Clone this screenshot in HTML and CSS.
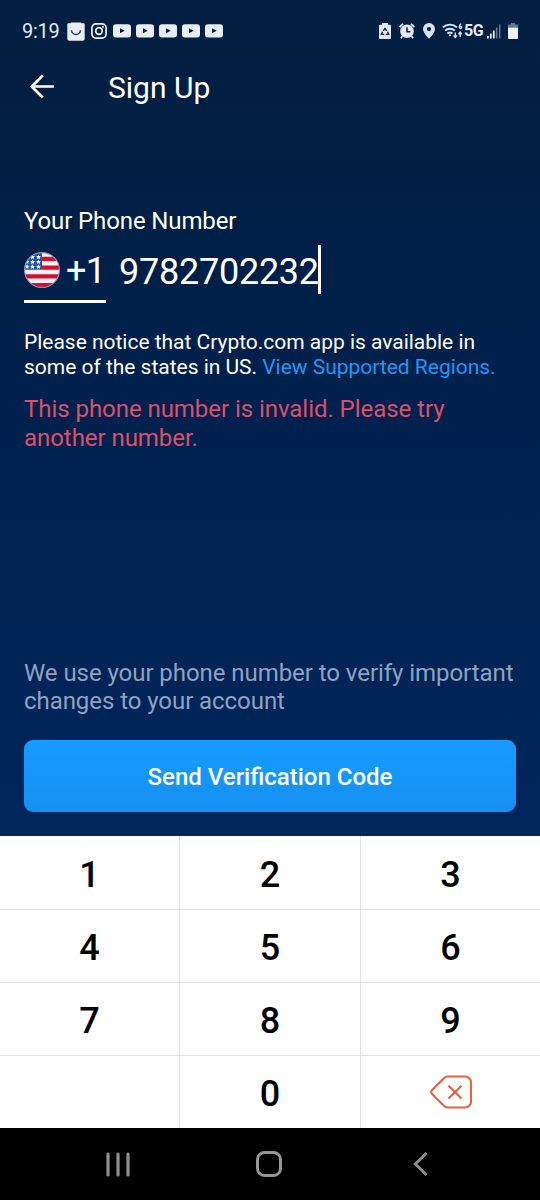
FILE: index.html
```html
<!DOCTYPE html>
<html lang="en">
<head>
<meta charset="utf-8">
<title>Sign Up</title>
<link rel="stylesheet" href="styles.css">
</head>
<body>
<div class="screen">
  <header class="status">
    <span class="clock">9:19</span>
    <svg class="st-bag" width="18" height="19" viewBox="0 0 18 19"><path d="M1.500 1.200h2L4 .5h10l.5.7h2a1.200 1.200 0 0 1 1.200 1.200v14.300a2 2 0 0 1-2 2H2.300a2 2 0 0 1-2-2V2.400a1.200 1.200 0 0 1 1.200-1.200z" fill="#e9edf7"/><path d="M4.700 8.200v.5a4.300 3.800 0 0 0 8.600 0v-.5" fill="none" stroke="#10294a" stroke-width="1.300"/></svg>
    <svg class="st-ig" width="16" height="16" viewBox="0 0 16 16" fill="none" stroke="#e9edf7" stroke-width="1.700"><rect x=".9" y=".9" width="14.200" height="14.200" rx="4"/><circle cx="8" cy="8" r="3.300"/><circle cx="12" cy="4" r=".3"/></svg>
    <div class="videos">
      <svg width="18" height="14" viewBox="0 0 18 14"><rect y=".3" width="18" height="13.200" rx="3" fill="#e9edf7"/><path d="M7 4.300v5l4.700-2.500z" fill="#071c3b"/></svg>
      <svg width="18" height="14" viewBox="0 0 18 14"><rect y=".3" width="18" height="13.200" rx="3" fill="#e9edf7"/><path d="M7 4.300v5l4.700-2.500z" fill="#071c3b"/></svg>
      <svg width="18" height="14" viewBox="0 0 18 14"><rect y=".3" width="18" height="13.200" rx="3" fill="#e9edf7"/><path d="M7 4.300v5l4.700-2.500z" fill="#071c3b"/></svg>
      <svg width="18" height="14" viewBox="0 0 18 14"><rect y=".3" width="18" height="13.200" rx="3" fill="#e9edf7"/><path d="M7 4.300v5l4.700-2.500z" fill="#071c3b"/></svg>
      <svg width="18" height="14" viewBox="0 0 18 14"><rect y=".3" width="18" height="13.200" rx="3" fill="#e9edf7"/><path d="M7 4.300v5l4.700-2.500z" fill="#071c3b"/></svg>
    </div>
    <svg class="st-recycle" width="12" height="16" viewBox="0 0 12 16"><path d="M3 0h6v1.800h2a1 1 0 0 1 1 1V15a1 1 0 0 1-1 1H1a1 1 0 0 1-1-1V2.800a1 1 0 0 1 1-1h2z" fill="#e3e9f6"/><path d="M4.200 7.900 6 5.500l1.800 2.400M8.600 8.700l1 2.500-2.800.3M5.200 11.500l-2.800-.3 1-2.500" fill="none" stroke="#10233f" stroke-width="1.400"/></svg>
    <svg class="st-alarm" width="16" height="16" viewBox="0 0 16 16"><circle cx="8" cy="8.200" r="6.800" fill="#e3e9f6"/><path d="M.6 4 4 .8M15.400 4 12 .8M3.400 13 2 15.200M12.600 13l1.400 2.200" stroke="#e3e9f6" stroke-width="1.800"/><path d="M8 4.200v4.500h3.300" fill="none" stroke="#071c3b" stroke-width="1.500"/></svg>
    <svg class="st-pin" width="12" height="16" viewBox="0 0 12 16"><path fill-rule="evenodd" d="M6 0a6 6 0 0 1 6 6c0 4-6 9.800-6 9.800S0 10 0 6a6 6 0 0 1 6-6zM6 4a2.100 2.100 0 1 0 0 4.200A2.100 2.100 0 0 0 6 4z" fill="#d9e1f3"/></svg>
    <svg class="st-wifi" width="21" height="16" viewBox="0 0 21 16" fill="none" stroke="#dce6fa" stroke-width="1.900"><path d="M.8 4.400a10.500 10.500 0 0 1 14.200 0M3 7.600a7.300 7.300 0 0 1 9.800 0M5.400 10.600a4 4 0 0 1 5 0"/><path d="M7.900 11.500v1.700" stroke-width="2"/><path d="M13.300 9.500v4.500M11.600 12.400l1.700 2 1.700-2M18.200 14V9.500M16.500 11.200l1.700-2 1.700 2" stroke-width="1.400"/><path d="M19.200 1c-2.200.5-2.400 4.500-.8 4.500s1.700-2.500-.3-2" stroke-width="1.300"/></svg>
    <span class="net">5G</span>
    <svg class="st-signal" width="14" height="15" viewBox="0 0 14 15"><path d="M0 12h1.800v2.500H0zM2.900 9.500h1.800v5H2.900zM5.900 6.500h1.800v8H5.900z" fill="#e3e9f6"/><path d="M8.900 3.500h1.500v11H8.900zM11.900.5h1.500v14h-1.500z" fill="#65799a"/></svg>
    <svg class="st-batt" width="10" height="16" viewBox="0 0 10 16"><path d="M3 0h4v1.500h3V5H0V1.500h3z" fill="#66768f"/><path d="M0 4.800h10V15a1 1 0 0 1-1 1H1a1 1 0 0 1-1-1z" fill="#edf1fa"/></svg>
  </header>

  <div class="titlebar">
    <svg width="26" height="26" viewBox="0 0 26 26" fill="none" stroke="#fff" stroke-width="2.700"><path d="M25 12.500H3M13.700 1.500 2.700 12.500l11 11"/></svg>
    <h1>Sign Up</h1>
  </div>

  <main class="content">
    <label class="label">Your Phone Number</label>
    <div class="phone">
      <div class="country">
        <svg width="36" height="36" viewBox="0 0 36 36">
          <defs>
            <clipPath id="disc"><circle cx="18" cy="18" r="17.500"/></clipPath>
          </defs>
          <g clip-path="url(#disc)">
            <rect width="36" height="36" fill="#f5f3f5"/>
            <path d="M0 4.700h36v4.300H0zM0 13.500h36v4.300H0zM0 22.300h36v4.200H0zM0 31h36v5H0z" fill="#d5102f"/>
            <rect width="18" height="17" fill="#1d55b0"/>
            <path id="star" d="M8.500 2.600l.75 1.500 1.650.2-1.200 1.150.3 1.650-1.500-.8-1.500.8.300-1.650-1.200-1.150 1.650-.2z" fill="#fff"/>
            <use href="#star" x="6"/><use href="#star" y="4.800"/><use href="#star" x="6" y="4.800"/><use href="#star" x="-5.500" y="4.800"/>
            <use href="#star" y="9.600"/><use href="#star" x="6" y="9.600"/><use href="#star" x="-5.500" y="9.600"/>
          </g>
          <circle cx="18" cy="18" r="17.400" fill="none" stroke="#8796b8" stroke-width="1.100"/>
        </svg>
        <span class="code">+1</span>
      </div>
      <div class="number">9782702232</div>
    </div>
    <p class="notice">Please notice that Crypto.com app is available in<br>some of the states in US. <a class="link">View Supported Regions.</a></p>
    <p class="error">This phone number is invalid. Please try<br>another number.</p>
    <p class="hint">We use your phone number to verify important<br>changes to your account</p>
    <button class="send">Send Verification Code</button>
  </main>

  <div class="keypad">
    <div class="key">1</div><div class="key">2</div><div class="key">3</div>
    <div class="key">4</div><div class="key">5</div><div class="key">6</div>
    <div class="key">7</div><div class="key">8</div><div class="key">9</div>
    <div class="key"></div><div class="key">0</div>
    <div class="key">
      <svg class="delete" width="42" height="34" viewBox="0 0 42 34" fill="none" stroke="#e8613f" stroke-width="2.100"><path d="M17.500 1.500H35a6 6 0 0 1 6 6v19a6 6 0 0 1-6 6H17.500a5 5 0 0 1-3.400-1.400L1.900 18.700a2.400 2.400 0 0 1 0-3.400L14.100 2.900a5 5 0 0 1 3.400-1.400z"/><path d="M18.500 10.700l13 12.700M31.500 10.700l-13 12.700"/></svg>
    </div>
  </div>

  <nav class="nav">
    <svg class="recents" width="24" height="25" viewBox="0 0 24 25" stroke="#8f8f8f" stroke-width="3.200" stroke-linecap="round"><path d="M2 2v21M12 2v21M22 2v21"/></svg>
    <svg class="home" width="26" height="26" viewBox="0 0 26 26" fill="none" stroke="#969696" stroke-width="3"><rect x="1.500" y="1.500" width="23" height="23" rx="7"/></svg>
    <svg class="back" width="15" height="25" viewBox="0 0 15 25" fill="none" stroke="#8f8f8f" stroke-width="2.800"><path d="M13.500 1 2.300 12l11.200 11"/></svg>
  </nav>
</div>
</body>
</html>
```

FILE: styles.css
```css
* { box-sizing: border-box; }
body { margin: 0; font-family: Roboto, sans-serif; }
h1, p { margin: 0; font-weight: 400; }
svg { display: block; flex: none; }

.screen {
  width: 540px;
  height: 1200px;
  overflow: hidden;
  display: flex;
  flex-direction: column;
  background: linear-gradient(#031e40 0, #00204a 300px, #00265c 836px);
  color: #fff;
}

.status {
  display: flex;
  align-items: center;
  height: 60px;
  padding: 2px 22px 0 22px;
  color: #e3e9f6;
}
.clock { width: 45px; font-size: 20px; line-height: 24px; letter-spacing: -0.3px; white-space: nowrap; }
.st-ig { margin-left: 6px; }
.videos { display: flex; gap: 5px; margin: 0 auto 0 6px; }
.st-alarm { margin-left: 8px; }
.st-pin { margin-left: 8px; }
.st-wifi { margin-left: 7px; }
.net { margin-left: 1px; width: 22px; font-size: 16px; font-weight: 700; line-height: 20px; letter-spacing: -0.4px; white-space: nowrap; }
.st-signal { margin-left: 1px; }
.st-batt { margin-left: 7px; }

.titlebar {
  display: flex;
  align-items: center;
  height: 54px;
  padding-left: 29px;
  gap: 53px;
}
.titlebar h1 { font-size: 30px; line-height: 36px; padding-top: 1px; }

.content {
  display: flex;
  flex-direction: column;
  height: 722px;
  padding: 93px 24px 24px;
}
.label { font-size: 24px; line-height: 28px; letter-spacing: -0.12px; }
.phone { display: flex; gap: 13px; margin-top: 10px; height: 58px; }
.country {
  display: flex;
  align-items: center;
  width: 82px;
  height: 58px;
  padding-bottom: 6px;
  border-bottom: 3px solid #fff;
}
.code { margin-left: 6px; padding-top: 3px; font-size: 36px; line-height: 42px; letter-spacing: -0.6px; }
.number {
  width: 202px;
  height: 49px;
  border-right: 3px solid #fff;
  font-size: 36px;
  line-height: 54px;
  letter-spacing: -0.25px;
}
.notice { margin-top: 27px; font-size: 21px; line-height: 25px; letter-spacing: -0.02px; white-space: nowrap; }
.link { color: #1f97f5; }
.error { margin-top: 15px; font-size: 24px; line-height: 29px; letter-spacing: -0.05px; color: #dd4f69; white-space: nowrap; }
.hint { margin-top: auto; font-size: 24px; line-height: 28px; letter-spacing: -0.06px; color: #8fa2c2; white-space: nowrap; }
.send {
  flex: none;
  height: 72px;
  margin-top: 25px;
  padding: 2px 0 0;
  border: 0;
  border-radius: 9px;
  background: linear-gradient(#169cff, #1590f0);
  color: #fff;
  font: 500 24px Roboto, sans-serif;
}

.keypad {
  display: grid;
  grid-template-columns: 180px 181px 179px;
  grid-template-rows: 74px 73px 73px 72px;
  background: #fff;
  color: #000;
}
.key {
  display: flex;
  align-items: center;
  justify-content: center;
  padding-top: 4px;
  border-right: 1px solid #e0e0e0;
  border-bottom: 1px solid #e0e0e0;
  font-size: 36px;
  font-weight: 500;
}
.key:nth-child(3n) { border-right: 0; }
.key:nth-child(n+10) { border-bottom: 0; }
.key:last-child { padding-top: 0; }

.nav {
  display: flex;
  align-items: center;
  height: 72px;
  padding-left: 106px;
  background: #000;
}
.home { margin-left: 126px; }
.back { margin-left: 131px; }
```
